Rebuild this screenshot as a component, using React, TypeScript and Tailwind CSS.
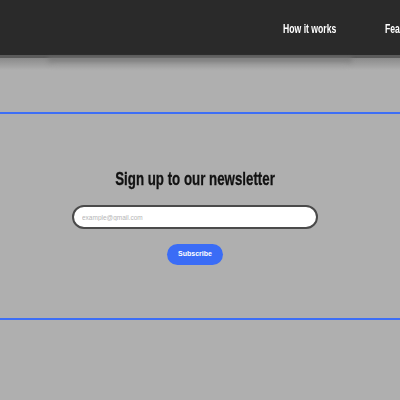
const font = { fontFamily: '"Liberation Sans", Arial, sans-serif' };

export default function App() {
  return (
    <div className="min-h-screen w-full overflow-hidden bg-[#afafaf]" style={font}>
      {/* Header */}
      <header className="relative h-[55px] bg-[#2a2a2a]">
        <nav className="flex h-full items-center pl-[283px] gap-[28px] pt-[2px] whitespace-nowrap">
          <a className="inline-block origin-left scale-x-[0.72] text-[12px] font-bold text-white">How it works</a>
          <a className="inline-block origin-left scale-x-[0.72] text-[12px] font-bold text-white">Features</a>
        </nav>
      </header>
      <div className="h-[3px] bg-[#5b5b5b]" />
      <div className="h-[12px] bg-gradient-to-b from-[#8a8a8a] to-[#afafaf] px-[48px]">
        <div className="h-[8px] rounded-b-full bg-gradient-to-b from-[#6a6a6a] to-[#afafaf] blur-[2px]" />
      </div>

      {/* Newsletter */}
      <section className="mt-[42px] border-y-2 border-[#3d6ef5] h-[208px] flex flex-col items-center pt-[55px] pr-[10px]">
        <h2 className="inline-block scale-x-[0.7] text-[19px] font-bold leading-none text-[#111] whitespace-nowrap [-webkit-text-stroke:0.3px_#111]">
          Sign up to our newsletter
        </h2>
        <input
          type="email"
          placeholder="example@gmail.com"
          className="mt-[17px] h-[24px] w-[246px] rounded-full border-2 border-[#4a4a4a] bg-white px-[8px] text-[6.5px] placeholder:text-[#b5b5b5] outline-none"
        />
        <button className="mt-[15px] h-[21px] w-[56px] rounded-full bg-[#3a6cf6] text-[7px] font-bold text-white">
          Subscribe
        </button>
      </section>
    </div>
  );
}
